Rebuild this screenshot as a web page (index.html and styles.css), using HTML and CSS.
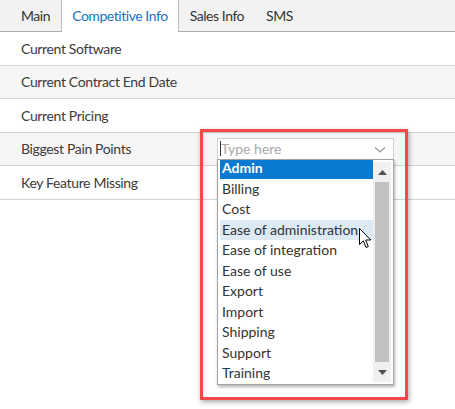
FILE: index.html
```html
<!DOCTYPE html>
<html>
<head>
<meta charset="utf-8">
<link rel="stylesheet" href="styles.css">
</head>
<body>
<div class="page">
  <div class="tabs">
    <div class="tab">Main</div>
    <div class="tab active">Competitive Info</div>
    <div class="tab">Sales Info</div>
    <div class="tab">SMS</div>
  </div>
  <div class="rows">
    <div class="row"><span class="label">Current Software</span></div>
    <div class="row alt"><span class="label">Current Contract End Date</span></div>
    <div class="row"><span class="label">Current Pricing</span></div>
    <div class="row alt">
      <span class="label">Biggest Pain Points</span>
      <div class="combo">
        <div class="input"><span class="caret"></span><span class="placeholder">Type here</span>
          <svg class="chev" width="12" height="8" viewBox="0 0 12 8"><path d="M1 1.5 L6 6 L11 1.5" fill="none" stroke="#9a9a9a" stroke-width="1.3"/></svg>
        </div>
        <div class="listbox">
          <ul class="options">
            <li class="selected">Admin</li>
            <li>Billing</li>
            <li>Cost</li>
            <li class="hover">Ease of administration</li>
            <li>Ease of integration</li>
            <li>Ease of use</li>
            <li>Export</li>
            <li>Import</li>
            <li>Shipping</li>
            <li>Support</li>
            <li>Training</li>
          </ul>
          <div class="scrollbar">
            <svg class="arrow" width="9" height="5" viewBox="0 0 9 5"><path d="M0 5 L4.5 0 L9 5 Z" fill="#505050"/></svg>
            <div class="thumb"></div>
            <svg class="arrow" width="9" height="5" viewBox="0 0 9 5"><path d="M0 0 L4.5 5 L9 0 Z" fill="#505050"/></svg>
          </div>
        </div>
        <svg class="cursor" width="13" height="21" viewBox="0 0 13 21"><path d="M0.5 0.5 L0.5 16.5 L4.3 12.8 L7 19.5 L9.3 18.5 L6.7 12 L11.8 12 Z" fill="#fff" stroke="#000" stroke-width="1" stroke-linejoin="miter"/></svg>
      </div>
    </div>
    <div class="row"><span class="label">Key Feature Missing</span></div>
  </div>
  <div class="annot"></div>
</div>
</body>
</html>
```

FILE: styles.css
```css
* { box-sizing: border-box; }
html, body { margin: 0; padding: 0; background: #fff; }
body {
  font-family: Lato, "Source Sans Pro", "Open Sans", sans-serif;
  font-size: 14px;
  color: #3b3b3b;
}
.page { position: relative; width: 455px; height: 409px; overflow: hidden; }

.tabs {
  display: flex;
  height: 32px;
  padding-left: 10px;
  background: #f2f2f2;
  border-bottom: 1px solid #aaaaaa;
}
.tab {
  padding: 0 10px;
  border-left: 1px solid transparent;
  border-right: 1px solid transparent;
  line-height: 31px;
  color: #333;
  margin-bottom: -1px;
  letter-spacing: -0.45px;
}
.tab.active {
  background: #fff;
  color: #1a72c2;
  border-left-color: #bdbdbd;
  border-right-color: #bdbdbd;
  height: 32px;
}

.row {
  display: flex;
  align-items: center;
  height: 33.5px;
  border-bottom: 1px solid #d4d4d4;
  padding-left: 21px;
  background: #fff;
}
.row.alt { background: #f6f6f6; }
.label { width: 196px; flex: none; letter-spacing: -0.35px; }

.combo { position: relative; width: 177px; }
.input {
  position: relative;
  height: 22px;
  border: 1px solid #cfcfcf;
  background: #fff;
  display: flex;
  align-items: center;
  padding-left: 2px;
}
.caret { width: 1px; height: 15px; background: #333; }
.placeholder { color: #a8a8a8; }
.chev { position: absolute; right: 7px; top: 7px; }

.listbox {
  position: absolute;
  left: 0;
  top: 21px;
  width: 177px;
  height: 226px;
  border: 1px solid #a2a2a2;
  background: #fff;
  padding: 2px;
  display: flex;
  box-shadow: 1px 2px 3px rgba(0,0,0,0.3);
  overflow: hidden;
}
.options {
  list-style: none;
  margin: -3.5px 0 0 0;
  padding: 0;
  flex: 1;
}
.options li {
  height: 20.5px;
  line-height: 20.5px;
  padding-left: 2px;
  color: #333;
  white-space: nowrap;
}
.options li.selected { background: #0a7ad0; color: #fff; font-weight: bold; }
.options li.hover { background: #dde9f3; }

.scrollbar {
  width: 18px;
  flex: none;
  background: #f0f0f0;
  display: flex;
  flex-direction: column;
  align-items: center;
}
.scrollbar .arrow { margin: 8px 0 7px; flex: none; }
.thumb { width: 14px; flex: 1; background: #c1c1c1; }

.cursor { position: absolute; left: 142px; top: 90px; }

.annot {
  position: absolute;
  left: 200px;
  top: 129px;
  width: 208px;
  height: 271px;
  border: 3px solid #f54848;
  box-shadow: 1px 2px 5px rgba(0,0,0,0.35), inset 1px 1px 3px rgba(0,0,0,0.12);
}
```
